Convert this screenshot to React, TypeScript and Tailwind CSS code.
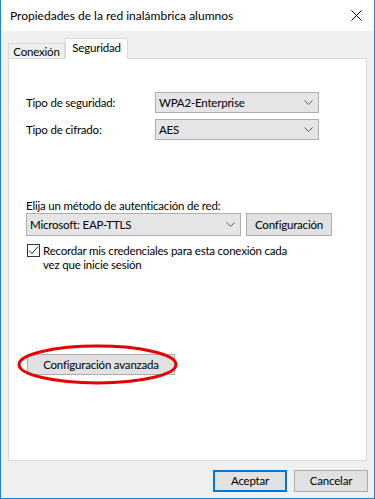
import React from "react";

const font = { fontFamily: "Lato, 'Noto Sans', sans-serif" };

const Chevron = () => (
  <svg width="9" height="5" viewBox="0 0 9 5" className="shrink-0">
    <path d="M0.5 0.5 L4.5 4.5 L8.5 0.5" fill="none" stroke="#5a5a5a" strokeWidth="1" />
  </svg>
);

const Select = ({ value, width }: { value: string; width: string }) => (
  <div className={`flex items-center justify-between ${width} border border-[#adadad] bg-[#e5e5e5] pl-[3px] pr-[5px]`}>
    <span>{value}</span>
    <Chevron />
  </div>
);

export default function App() {
  return (
    <div className="flex h-[499px] w-[375px] flex-col border-x border-b border-[#1883d7] bg-[#f0f0f0] text-[11.5px] tracking-[-0.2px] text-black" style={font}>
      {/* Title bar */}
      <div className="flex h-[31px] shrink-0 items-center justify-between bg-white pl-[9px] pr-[12px]">
        <span className="text-[12px] tracking-normal">Propiedades de la red inalámbrica alumnos</span>
        <svg width="11" height="11" viewBox="0 0 11 11">
          <path d="M0.5 0.5 L10.5 10.5 M10.5 0.5 L0.5 10.5" stroke="#000" strokeWidth="1" />
        </svg>
      </div>

      {/* Tabs */}
      <div className="mt-[7px] flex items-end pl-[7px]">
        <div className="flex h-[15px] w-[57px] items-center justify-center border border-b-0 border-[#d9d9d9] bg-[#f0f0f0] pt-[1px]">
          Conexión
        </div>
        <div className="relative z-10 -mb-px flex h-[21px] w-[63px] items-center justify-center border border-b-0 border-[#d9d9d9] bg-white pb-[2px]">
          Seguridad
        </div>
      </div>

      {/* Panel */}
      <div className="relative mx-[7px] flex h-[403px] flex-col border border-[#d9d9d9] bg-white pl-[17px]">
        <div className="mt-[33px] flex flex-col gap-[6px]">
          <div className="flex h-[21px] items-center">
            <span className="w-[129px]">Tipo de seguridad:</span>
            <Select value="WPA2-Enterprise" width="w-[164px] h-[21px]" />
          </div>
          <div className="flex h-[21px] items-center">
            <span className="w-[129px]">Tipo de cifrado:</span>
            <Select value="AES" width="w-[164px] h-[21px]" />
          </div>
        </div>

        <div className="mt-[58px] h-[15px] leading-[15px]">Elija un método de autenticación de red:</div>
        <div className="flex gap-[5px]">
          <Select value="Microsoft: EAP-TTLS" width="w-[215px] h-[23px]" />
          <button className="h-[23px] w-[86px] border border-[#adadad] bg-[#e1e1e1]">Configuración</button>
        </div>

        <div className="mt-[8px] flex items-start pl-[1px]">
          <div className="flex h-[13px] w-[13px] shrink-0 items-center justify-center border border-[#333] bg-white">
            <svg width="11" height="11" viewBox="0 0 11 11">
              <path d="M1 5.5 L4 8.5 L10 1.5" fill="none" stroke="#222" strokeWidth="1" />
            </svg>
          </div>
          <p className="ml-[3px] leading-[13.5px]">
            Recordar mis credenciales para esta conexión cada
            <br />
            vez que inicie sesión
          </p>
        </div>

        <div className="relative mt-[83px] w-fit">
          <button className="ml-[1px] h-[21px] w-[148px] border border-[#adadad] bg-[#e1e1e1]">Configuración avanzada</button>
          <svg className="absolute left-[-9px] top-[-10px]" width="161" height="41" viewBox="0 0 161 41">
            <ellipse cx="80.5" cy="20.5" rx="78.5" ry="18.5" fill="none" stroke="#e60000" strokeWidth="3" />
          </svg>
        </div>
      </div>

      {/* Footer buttons */}
      <div className="mt-[9px] flex justify-end gap-[7px] pr-[6px]">
        <button className="h-[22px] w-[74px] border-2 border-[#0078d7] bg-[#e1e1e1]">Aceptar</button>
        <button className="h-[22px] w-[74px] border border-[#adadad] bg-[#e1e1e1]">Cancelar</button>
      </div>
    </div>
  );
}
